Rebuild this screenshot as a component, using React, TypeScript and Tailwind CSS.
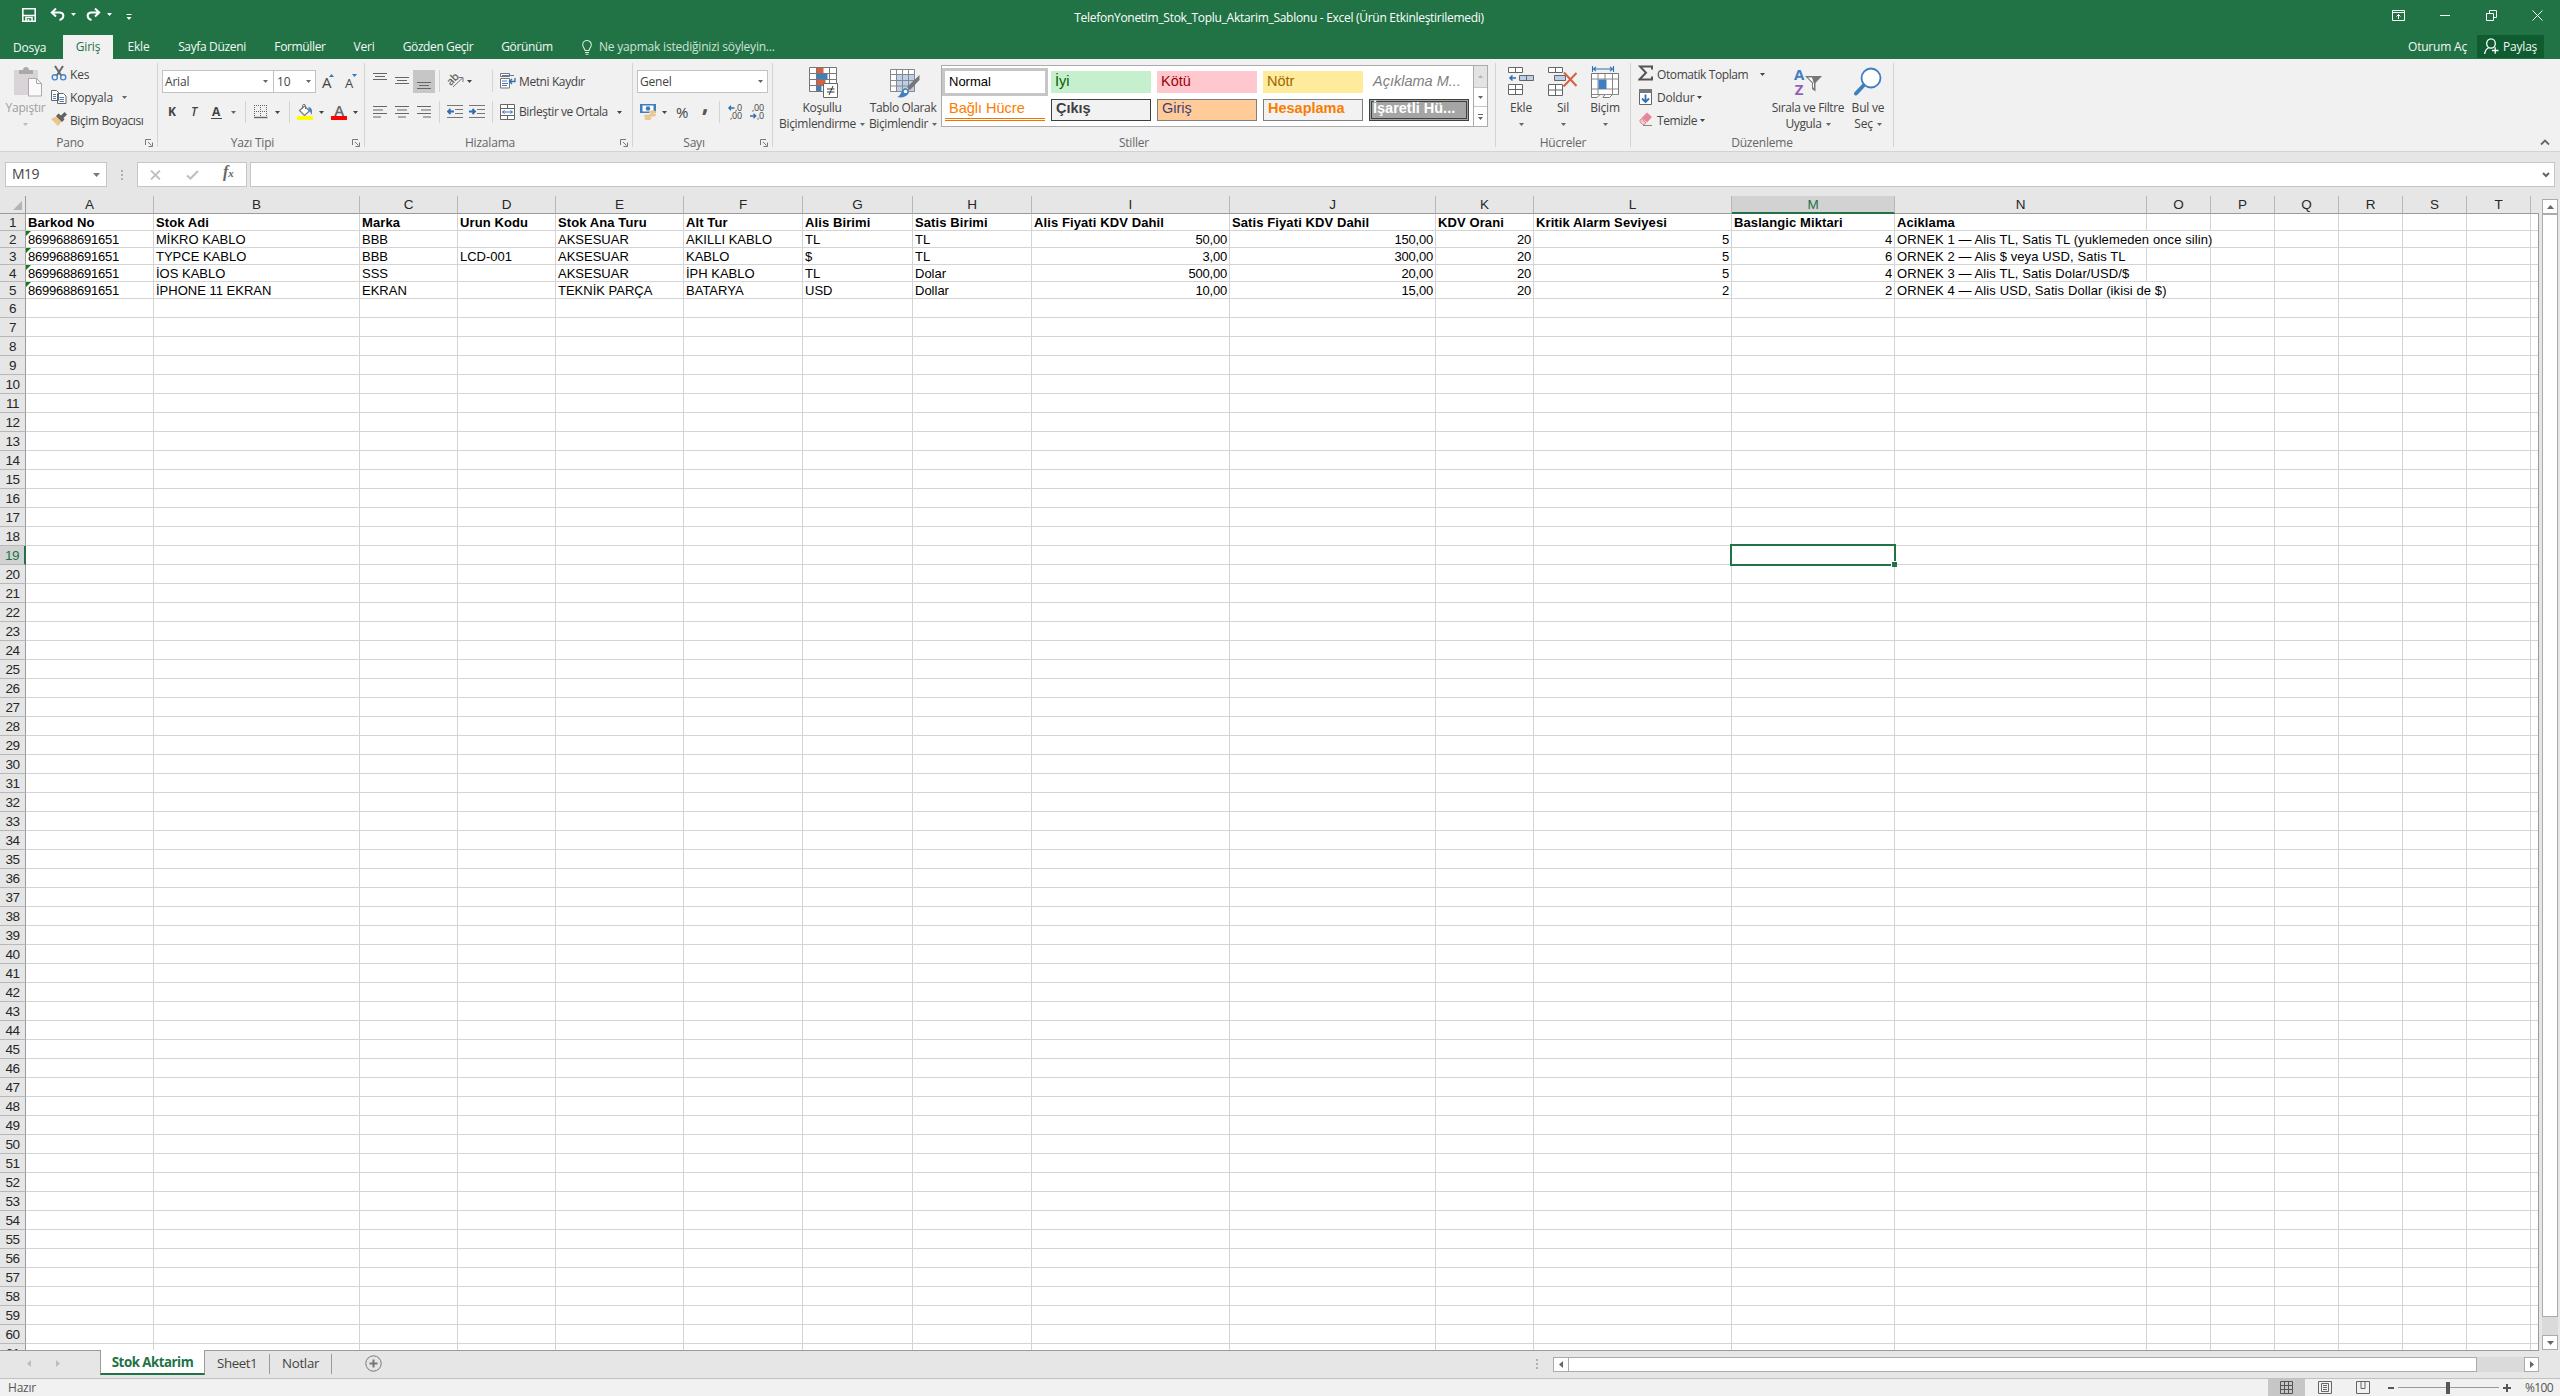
import React from 'react'
import clsx from 'clsx'

interface Column {
    id: string
    width: number
}

interface StyleCell {
    label: string
    className: string
}

const COLUMNS: Column[] = [
    { id: 'A', width: 128 },
    { id: 'B', width: 206 },
    { id: 'C', width: 98 },
    { id: 'D', width: 98 },
    { id: 'E', width: 128 },
    { id: 'F', width: 119 },
    { id: 'G', width: 110 },
    { id: 'H', width: 119 },
    { id: 'I', width: 198 },
    { id: 'J', width: 206 },
    { id: 'K', width: 98 },
    { id: 'L', width: 198 },
    { id: 'M', width: 163 },
    { id: 'N', width: 252 },
    { id: 'O', width: 64 },
    { id: 'P', width: 64 },
    { id: 'Q', width: 64 },
    { id: 'R', width: 64 },
    { id: 'S', width: 64 },
    { id: 'T', width: 64 },
]

const HEADERS = ['Barkod No', 'Stok Adi', 'Marka', 'Urun Kodu', 'Stok Ana Turu', 'Alt Tur', 'Alis Birimi', 'Satis Birimi', 'Alis Fiyati KDV Dahil', 'Satis Fiyati KDV Dahil', 'KDV Orani', 'Kritik Alarm Seviyesi', 'Baslangic Miktari', 'Aciklama']

const DATA = [
    HEADERS,
    ['8699688691651', 'MİKRO KABLO', 'BBB', '', 'AKSESUAR', 'AKILLI KABLO', 'TL', 'TL', '50,00', '150,00', '20', '5', '4', 'ORNEK 1 — Alis TL, Satis TL (yuklemeden once silin)'],
    ['8699688691651', 'TYPCE KABLO', 'BBB', 'LCD-001', 'AKSESUAR', 'KABLO', '$', 'TL', '3,00', '300,00', '20', '5', '6', 'ORNEK 2 — Alis $ veya USD, Satis TL'],
    ['8699688691651', 'İOS KABLO', 'SSS', '', 'AKSESUAR', 'İPH KABLO', 'TL', 'Dolar', '500,00', '20,00', '20', '5', '4', 'ORNEK 3 — Alis TL, Satis Dolar/USD/$'],
    ['8699688691651', 'İPHONE 11 EKRAN', 'EKRAN', '', 'TEKNİK PARÇA', 'BATARYA', 'USD', 'Dollar', '10,00', '15,00', '20', '2', '2', 'ORNEK 4 — Alis USD, Satis Dollar (ikisi de $)'],
]

// how many empty neighbours the text of column N runs over, by row number
const SPILL: Record<number, number> = { 2: 2, 5: 1 }

const ROW_COUNT = 61
const ACTIVE_ROW = 19
const ACTIVE_COL = 'M'

const STYLES: StyleCell[] = [
    { label: 'Normal', className: 'bg-white text-black text-[13px] leading-[21px] outline-3 outline-[#c6c6c6]' },
    { label: 'İyi', className: 'bg-[#c6efce] text-[#006100] text-[14.5px] leading-[20px]' },
    { label: 'Kötü', className: 'bg-[#ffc7ce] text-[#9c0006] text-[14.5px] leading-[20px]' },
    { label: 'Nötr', className: 'bg-[#ffeb9c] text-[#9c6500] text-[14.5px] leading-[20px]' },
    { label: 'Açıklama M...', className: 'italic text-[#7f7f7f] text-[14.5px] leading-[20px]' },
    { label: 'Bağlı Hücre', className: 'text-[#fa7d00] text-[14.5px] leading-[18px] border-b-3 border-double border-[#ea7500]' },
    { label: 'Çıkış', className: 'bg-[#f2f2f2] font-bold text-[#3f3f3f] text-[14.5px] leading-[17px] border border-[#3f3f3f]' },
    { label: 'Giriş', className: 'bg-[#ffcc99] text-[#3f3f76] text-[14.5px] leading-[17px] border border-[#7f7f7f]' },
    { label: 'Hesaplama', className: 'bg-[#f2f2f2] font-bold text-[#fa7d00] text-[14.5px] leading-[17px] border border-[#7f7f7f]' },
    { label: 'İşaretli Hü...', className: 'bg-[#a5a5a5] font-bold text-white text-[14.5px] leading-[13px] -indent-[3px] border-3 border-double border-[#3f3f3f]' },
]

/* ---------- small shared bits ---------- */

function Caret({ className }: { className?: string }) {
    return (
        <svg width="5" height="3" viewBox="0 0 5 3" className={clsx('shrink-0', className ?? 'text-[#666]')}>
            <path d="M0 0h5L2.5 3z" fill="currentColor" />
        </svg>
    )
}

function Divider({ className }: { className?: string }) {
    return <div className={clsx('h-[22px] w-px shrink-0 bg-[#d4d4d4]', className)} />
}

function Launcher() {
    return (
        <svg width="8" height="8" viewBox="0 0 8 8" fill="none" stroke="#777">
            <path d="M.5 6V.5H6M3 3l3.5 3.5M7.5 3.5v4h-4" />
        </svg>
    )
}

interface GroupProps {
    label: string
    className: string
    launcher?: boolean
    children: React.ReactNode
}

function Group({ label, className, launcher, children }: GroupProps) {
    return (
        <div className={clsx('flex h-full shrink-0', className)}>
            <div className="flex min-w-0 flex-1 flex-col">
                <div className="h-[76px]">{children}</div>
                <div className="flex h-4 items-center">
                    <span className={clsx('flex-1 text-center text-[#666]', launcher && 'pr-[5px]')}>{label}</span>
                    {launcher && (
                        <span className="w-3">
                            <Launcher />
                        </span>
                    )}
                </div>
            </div>
            <div className="mt-1 h-[84px] w-px bg-[#d4d4d4]" />
        </div>
    )
}

interface BigButtonProps {
    icon: React.ReactNode
    line1: string
    line2?: string
    className: string
    muted?: boolean
}

function BigButton({ icon, line1, line2, className, muted }: BigButtonProps) {
    return (
        <div className={clsx('flex shrink-0 flex-col items-center whitespace-nowrap', muted ? 'text-[#a0a0a0]' : 'text-[#444]', className)}>
            <div className="mt-[6px] h-[35px]">{icon}</div>
            <div className="h-4 leading-4">{line1}</div>
            <div className="flex h-4 items-center gap-1 leading-4">
                {line2}
                <Caret className={muted ? 'text-[#bbb]' : 'text-[#666]'} />
            </div>
        </div>
    )
}

/* ---------- title bar + tabs ---------- */

function TitleBar() {
    return (
        <div className="flex h-[35px] text-white">
            <div className="flex w-[1072px] pl-[22px]">
                <svg width="14" height="14" viewBox="0 0 14 14" className="mt-2" fill="none" stroke="white" strokeWidth="1.6">
                    <path d="M.8.8h12.4v12.4H.8zM1 7.5h12" />
                    <path d="M4 13v-3.500h6V13M6.500 11v2" />
                </svg>
                <svg width="15" height="13" viewBox="0 0 15 13" className="mt-2 ml-[14px]" fill="none" stroke="white" strokeWidth="2">
                    <path d="M1.500 4.500h8.500c5 .8 4 6.500-.5 7.500M6 .5L1.800 4.500 6 8.500" />
                </svg>
                <Caret className="mt-[13px] ml-1.5 text-white" />
                <svg width="15" height="13" viewBox="0 0 15 13" className="mt-2 ml-[10px]" fill="none" stroke="white" strokeWidth="2">
                    <path d="M13.500 4.500H5c-5 .8-4 6.500.5 7.500M9 .5l4.200 4L9 8.500" />
                </svg>
                <Caret className="mt-[13px] ml-1.5 text-white" />
                <svg width="6" height="6" viewBox="0 0 6 6" className="mt-[14px] ml-[14px]">
                    <path d="M.5 0h5v1h-5zM.5 3h5L3 6z" fill="white" />
                </svg>
            </div>
            <div className="w-[414px] pt-[10px] text-center leading-4 tracking-[-0.29px] whitespace-nowrap">TelefonYonetim_Stok_Toplu_Aktarim_Sablonu - Excel (Ürün Etkinleştirilemedi)</div>
            <div className="flex flex-1 justify-end pt-[9px] pr-[17px]">
                <svg width="13" height="11" viewBox="0 0 13 11" className="mt-px mr-[35px]" fill="none" stroke="white">
                    <path d="M.5.5h12v10H.5zM.5 2.500h12M6.500 9V4.500M4.500 6.500l2-2 2 2" />
                </svg>
                <svg width="10" height="11" viewBox="0 0 10 11" className="mr-[36px]" stroke="white">
                    <path d="M0 6.500h10" />
                </svg>
                <svg width="11" height="11" viewBox="0 0 11 11" className="mt-px mr-[35px]" fill="none" stroke="white">
                    <path d="M.5 3.500h7v7h-7zM3.500 3.500v-3h7v7h-3" />
                </svg>
                <svg width="11" height="11" viewBox="0 0 11 11" className="mt-px" stroke="white">
                    <path d="M.5.5l10 10M10.500.5l-10 10" />
                </svg>
            </div>
        </div>
    )
}

function RibbonTabs() {
    return (
        <div className="flex h-6 items-center text-[#f3f8f5]">
            <div className="w-[63px] pr-1 pl-[13px] pt-px">Dosya</div>
            <div className="flex h-full w-[50px] items-center justify-center bg-[#f1f1f1] text-[#217346]">Giriş</div>
            <div className="w-[51px] text-center">Ekle</div>
            <div className="w-[96px] text-center tracking-[-0.35px] whitespace-nowrap">Sayfa Düzeni</div>
            <div className="w-[80px] text-center tracking-[-0.35px]">Formüller</div>
            <div className="w-[48px] text-center">Veri</div>
            <div className="w-[100px] text-center tracking-[-0.4px] whitespace-nowrap">Gözden Geçir</div>
            <div className="w-[78px] text-center tracking-[-0.35px]">Görünüm</div>
            <svg width="10" height="15" viewBox="0 0 10 15" className="ml-4" fill="none" stroke="#d5e6dc" strokeWidth="1.100">
                <path d="M3 10.500C3 8.500.7 7.500.7 4.800a4.300 4.300 0 018.600 0C9.300 7.500 7 8.500 7 10.500zM3 12.500h4M3.500 14.300h3" />
            </svg>
            <div className="ml-[7px] tracking-[-0.2px] whitespace-nowrap text-[#cfe2d7]">Ne yapmak istediğinizi söyleyin...</div>
            <div className="ml-auto whitespace-nowrap">Oturum Aç</div>
            <div className="mr-4 ml-[10px] flex h-[23px] w-[67px] items-center self-start bg-[#0e5c2f] pl-[7px]">
                <svg width="15" height="17" viewBox="0 0 15 17" fill="none" stroke="white" strokeWidth="1.300">
                    <ellipse cx="7" cy="5.500" rx="4.300" ry="4.700" />
                    <path d="M.7 16c.3-3.500 2-5.500 4.300-6.500M8 12.500h6.500M11.200 9.300v6.500" />
                </svg>
                <span className="ml-1">Paylaş</span>
            </div>
        </div>
    )
}

/* ---------- ribbon ---------- */

function ClipboardGroup() {
    return (
        <Group label="Pano" className="w-[158px]" launcher>
            <div className="flex">
                <BigButton
                    className="w-[51px]"
                    muted
                    line1="Yapıştır"
                    icon={
                        <svg width="30" height="32" viewBox="0 0 30 32" className="ml-1">
                            <path d="M1 5h24v25H1z" fill="#d8d4d8" />
                            <path d="M6 5h4c0-4 6-4 6 0h4v4H6z" fill="#aaa" />
                            <path d="M15.500 13.500h8l5 5v12.500h-13z" fill="#fbf9fb" stroke="#aaa" />
                            <path d="M23.500 13.500v5h5" fill="none" stroke="#aaa" />
                        </svg>
                    }
                />
                <div className="flex flex-col pt-[4px] text-[#444]">
                    <div className="flex h-[23px] items-center">
                        <svg width="16" height="16" viewBox="0 0 16 16" fill="none" className="mb-1">
                            <path d="M4 1l6.500 10M12 1L5.500 11" stroke="#666" strokeWidth="2" />
                            <circle cx="3.800" cy="12.300" r="2.600" stroke="#4a86c5" strokeWidth="1.400" />
                            <circle cx="12.200" cy="12.300" r="2.600" stroke="#4a86c5" strokeWidth="1.400" />
                        </svg>
                        <span className="ml-[3px]">Kes</span>
                    </div>
                    <div className="flex h-[23px] items-center">
                        <svg width="16" height="14" viewBox="0 0 16 14" className="mb-0.5">
                            <path d="M.5.500h5l2 2v8h-7zM6.500 3.500h6l2.500 2.500v7.500H6.500z" fill="white" stroke="#666" />
                            <path d="M2 4.500h3M2 6.500h3M2 8.500h3M8.500 7.500h4.500M8.500 9.500h4.500M8.500 11.500h4.500" stroke="#4a7ebb" />
                        </svg>
                        <span className="ml-[3px] w-[42px]">Kopyala</span>
                        <Caret className="ml-[10px] text-[#666]" />
                    </div>
                    <div className="flex h-[23px] items-center">
                        <svg width="16" height="14" viewBox="0 0 16 14" className="mb-1">
                            <path d="M0 7l6-3 5 5-4 5z" fill="#ebc68c" />
                            <path d="M5 4l2.500-2.500 2.500 2L13.500 0 16 2.500 12.500 6l1 1.500L11 10z" fill="#636363" />
                        </svg>
                        <span className="ml-[3px] tracking-[-0.4px] whitespace-nowrap">Biçim Boyacısı</span>
                    </div>
                </div>
            </div>
        </Group>
    )
}

function FontGroup() {
    return (
        <Group label="Yazı Tipi" className="w-[207px]" launcher>
            <div className="flex pt-[11px] pl-1 text-[#444]">
                <div className="flex h-[23px] w-[112px] items-center justify-between border border-[#c3c3c3] bg-white pr-[5px] pl-[2px]">
                    <span>Arial</span>
                    <Caret />
                </div>
                <div className="-ml-px flex h-[23px] w-[43px] items-center justify-between border border-[#c3c3c3] bg-white pr-1 pl-[3px]">
                    <span>10</span>
                    <Caret />
                </div>
                <div className="ml-1.5 flex w-[14px] pt-[4px]">
                    <span className="text-[15px]/4 text-[#444]">A</span>
                    <svg width="5" height="3" viewBox="0 0 5 3" className="-ml-0.5 shrink-0"><path d="M0 3h5L2.500 0z" fill="#2b7bc4" /></svg>
                </div>
                <div className="ml-[9px] flex w-[14px] pt-[4px]">
                    <span className="text-[13px]/[18px] text-[#444]">A</span>
                    <svg width="5" height="3" viewBox="0 0 5 3" className="-ml-px shrink-0"><path d="M0 0h5L2.500 3z" fill="#2b7bc4" /></svg>
                </div>
            </div>
            <div className="mt-2 flex h-[22px] items-center pl-[3px] text-[#444]">
                <span className="w-[22px] text-center font-bold">K</span>
                <span className="w-[22px] text-center font-semibold italic">T</span>
                <div className="flex w-[22px] justify-center">
                    <span className="h-[13px] w-[11px] border-b border-[#444] text-center text-xs/3 font-bold">A</span>
                </div>
                <Caret className="mx-[4px] text-[#666]" />
                <Divider className="ml-[5px]" />
                <svg width="14" height="14" viewBox="0 0 14 14" className="ml-2" stroke="#666" fill="none">
                    <path d="M.5 0v12M6.500 0v12M12.500 0v12M0 .5h13M0 6.500h13" strokeDasharray="1 1" />
                    <path d="M0 12.500h13.500" strokeWidth="1.400" />
                </svg>
                <Caret className="ml-[7px]" />
                <Divider className="ml-[9px]" />
                <svg width="16" height="16" viewBox="0 0 16 16" className="ml-[7px]">
                    <path d="M2.500 6.500l5-4.500 5 5-5 4.500z" fill="white" stroke="#777" strokeWidth="1.200" />
                    <path d="M5.500 5V1.500c0-1.500 3-1.500 3 0V5" fill="none" stroke="#777" />
                    <path d="M11.500 3c3 .5 4.500 3 3 8-1-2-1-4-3-5z" fill="#4a86c5" />
                    <path d="M0 12h16v4H0z" fill="#ffff00" />
                </svg>
                <Caret className="ml-1.5" />
                <div className="ml-[7px] flex w-4 flex-col items-center">
                    <span className="h-3 text-[15px]/3 font-semibold text-[#666]">A</span>
                    <span className="h-1 w-4 bg-[#ff0000]" />
                </div>
                <Caret className="ml-1.5" />
            </div>
        </Group>
    )
}

function Lines({ d, className }: { d: string; className?: string }) {
    return (
        <svg width="14" height="12" viewBox="0 0 14 12" className={clsx('shrink-0', className)} stroke="#666">
            <path d={d} />
        </svg>
    )
}

function IndentIcon({ arrow, className }: { arrow: string; className?: string }) {
    return (
        <svg width="16" height="14" viewBox="0 0 16 14" className={clsx('shrink-0', className)} fill="none">
            <path d="M0 .5h16M8 4.500h8M8 8.500h8M0 12.500h16" stroke="#777" />
            <path d={arrow} stroke="#2f6fb3" strokeWidth="1.800" />
        </svg>
    )
}

function AlignGroup() {
    return (
        <Group label="Hizalama" className="w-[268px]" launcher>
            <div className="flex pt-[11px] text-[#444]">
                <Lines className="ml-2 mt-[3px]" d="M0 .5h14M2 3.500h10M0 6.500h14" />
                <Lines className="ml-2 mt-[7px]" d="M0 .5h14M2 3.500h10M0 6.500h14" />
                <div className="ml-1 h-[23px] w-[22px] bg-[#c6c6c6] pt-3 pl-1">
                    <Lines d="M0 .5h14M2 3.500h10M0 6.500h14" />
                </div>
                <Divider className="ml-1" />
                <div className="relative ml-[7px] h-[23px] w-4">
                    <span className="absolute top-px -left-px -rotate-45 text-[11px]/4 font-semibold text-[#666]">ab</span>
                    <svg width="12" height="12" viewBox="0 0 12 12" className="absolute top-1.5 left-[5px]" fill="none" stroke="#777">
                        <path d="M1 11L10.500 2M6.500 1.500h4.500v4.500" />
                    </svg>
                </div>
                <Caret className="mt-[10px] ml-1" />
                <Divider className="ml-[20px]" />
                <svg width="16" height="16" viewBox="0 0 16 16" className="mt-[3px] ml-[7px]">
                    <path d="M.5.500h9v3h-9zM.5 5.500h9v9.500h-9z" fill="white" stroke="#777" />
                    <path d="M2 2.500h12M2 8h5M2 10.500h6M2 12.500h5" stroke="#4a7ebb" />
                    <path d="M15 5v3.500H10M12 6l-2.500 2.500L12 11" fill="none" stroke="#2f6fb3" strokeWidth="1.300" />
                </svg>
                <span className="ml-[3px] leading-[23px] tracking-[-0.4px] whitespace-nowrap">Metni Kaydır</span>
            </div>
            <div className="mt-2 flex h-[22px] items-center text-[#444]">
                <Lines className="ml-2" d="M0 .5h14M0 4h10M0 7.500h14M0 11h8" />
                <Lines className="ml-2" d="M0 .5h14M2 4h10M0 7.500h14M3 11h8" />
                <Lines className="ml-2" d="M0 .5h14M4 4h10M0 7.500h14M6 11h8" />
                <Divider className="ml-2" />
                <IndentIcon className="ml-[7px]" arrow="M7 6.500H1M3.500 4L1 6.500 3.500 9" />
                <IndentIcon className="ml-1.5" arrow="M0 6.500h6M3.500 4L6 6.500 3.500 9" />
                <Divider className="ml-[7px]" />
                <svg width="15" height="16" viewBox="0 0 15 16" className="ml-[7px]">
                    <path d="M.5.5h14v15H.5zM.5 4.500h14M.5 11.500h14M7.500.5v4M7.500 11.500v4" fill="white" stroke="#666" />
                    <path d="M2.500 8h10M4.500 6.500L2.500 8l2 1.500M10.500 6.500l2 1.500-2 1.500" fill="none" stroke="#2f6fb3" />
                </svg>
                <span className="ml-1 w-[88px] tracking-[-0.45px] whitespace-nowrap">Birleştir ve Ortala</span>
                <Caret className="ml-[10px]" />
            </div>
        </Group>
    )
}

function NumberGroup() {
    return (
        <Group label="Sayı" className="w-[140px]" launcher>
            <div className="flex pt-[11px] pl-1 text-[#444]">
                <div className="flex h-[23px] w-[131px] items-center justify-between border border-[#c3c3c3] bg-white pr-1 pl-[2px]">
                    <span>Genel</span>
                    <Caret />
                </div>
            </div>
            <div className="mt-2 flex h-[22px] items-center pl-[7px] text-[#444]">
                <svg width="16" height="16" viewBox="0 0 16 16">
                    <path d="M0 0h16v9H0z" fill="#3f7fc0" />
                    <path d="M2.500 1.500h11v6h-11z" fill="white" />
                    <circle cx="8" cy="4.500" r="2.300" fill="#3f7fc0" />
                    <ellipse cx="12.500" cy="8" rx="3.500" ry="1.800" fill="#ebc68c" />
                    <ellipse cx="12.500" cy="11" rx="3.500" ry="1.500" fill="#ebc68c" />
                    <ellipse cx="7.500" cy="12" rx="3.500" ry="1.500" fill="#ebc68c" />
                    <ellipse cx="8" cy="14.500" rx="3.500" ry="1.500" fill="#ebc68c" />
                </svg>
                <Caret className="ml-1.5" />
                <span className="ml-[9px] w-[15px] text-[15px] text-[#444]">%</span>
                <span className="ml-[10px] w-[8px] pb-[19px] text-center text-2xl/3 font-bold text-[#555]">,</span>
                <Divider className="ml-[10px]" />
                <div className="ml-[7px] flex w-[15px] flex-col items-end text-[9px]/[8px]">
                    <span className="flex items-center">
                        <svg width="7" height="6" viewBox="0 0 7 6" fill="none" stroke="#2f6fb3" strokeWidth="1.300"><path d="M6.500 3H1M3 .8L.8 3 3 5.200" /></svg>
                        ,0
                    </span>
                    <span>,00</span>
                </div>
                <div className="ml-[7px] flex w-[15px] flex-col items-end text-[9px]/[8px]">
                    <span>,00</span>
                    <span className="flex items-center">
                        <svg width="7" height="6" viewBox="0 0 7 6" fill="none" stroke="#2f6fb3" strokeWidth="1.300"><path d="M0 3h5.500M3.500.8L5.800 3 3.500 5.200" /></svg>
                        ,0
                    </span>
                </div>
            </div>
        </Group>
    )
}

function StylesGroup() {
    return (
        <Group label="Stiller" className="w-[723px]">
            <div className="flex">
                <BigButton
                    className="ml-1 w-[90px] tracking-[-0.3px]"
                    line1="Koşullu"
                    line2="Biçimlendirme"
                    icon={
                        <svg width="30" height="31" viewBox="0 0 30 31" className="mt-0.5 ml-1">
                            <path d="M.5.500h27v24H.5z" fill="white" />
                            <path d="M7.500.500h7v6h-7zM7.500 12.500h9v6h-9z" fill="#d9603f" />
                            <path d="M7.500 6.500h11v6h-11zM7.500 18.500h5v6h-5z" fill="#3f7fc0" />
                            <path d="M.5.500h27v24H.5zM.5 6.500h27M.5 12.500h27M.5 18.500h27M7.500.500v24M20.500.500v24" fill="none" stroke="#777" />
                            <path d="M14.500 16.500h14v14h-14z" fill="white" stroke="#666" />
                            <path d="M18 22h7.500M18 25h7.500M24 19l-4 9" stroke="#333" />
                        </svg>
                    }
                />
                <BigButton
                    className="-ml-[2px] w-[76px] tracking-[-0.35px]"
                    line1="Tablo Olarak"
                    line2="Biçimlendir"
                    icon={
                        <svg width="30" height="29" viewBox="0 0 30 29" className="mt-1 ml-1">
                            <path d="M.5.500h24v22H.5z" fill="white" />
                            <path d="M6.500 5.500h18v17h-18z" fill="#bdd0e9" />
                            <path d="M.5.500h24v22H.5zM.5 5.500h24M.5 11.500h24M.5 17h24M6.500.500v22M12.500.500v22M18.500.500v22" fill="none" stroke="#888" />
                            <path d="M29.500 6v5L20 21l-3-3z" fill="#777" />
                            <path d="M7 28c4-1 4-6 7-8.500 3-1 6 2 4.500 5C16 28.500 11 29 7 28z" fill="#3f7fc0" />
                            <circle cx="15.500" cy="22.500" r="1.800" fill="white" />
                        </svg>
                    }
                />
                <div className="mt-1.5 flex h-[62px] w-[547px] border border-[#ababab] bg-white font-['Liberation_Sans',sans-serif] tracking-normal">
                    <div className="grid grid-cols-[repeat(5,100px)] grid-rows-[22px_22px] content-start gap-x-1.5 gap-y-1.5 pt-[5px] pl-[3px]">
                        {STYLES.map(style => (
                            <div key={style.label} className={clsx('pl-1 whitespace-nowrap', style.className)}>
                                {style.label}
                            </div>
                        ))}
                    </div>
                    <div className="ml-auto flex w-[14px] flex-col border-l border-[#ababab]">
                        <div className="flex h-[21px] items-center justify-center bg-[#e3e3e3]"><Caret className="rotate-180 text-[#b5b5b5]" /></div>
                        <div className="flex h-[20px] items-center justify-center border-y border-[#c6c6c6]"><Caret /></div>
                        <div className="flex flex-1 flex-col items-center justify-center gap-[2px]">
                            <span className="h-px w-[5px] bg-[#666]" />
                            <Caret />
                        </div>
                    </div>
                </div>
            </div>
        </Group>
    )
}

function CellsGroup() {
    return (
        <Group label="Hücreler" className="w-[135px]">
            <div className="flex pl-1">
                <BigButton
                    className="w-[42px]"
                    line1="Ekle"
                    icon={
                        <svg width="27" height="30" viewBox="0 0 27 30" className="mt-0.5">
                            <path d="M.5.500h14v5H.5zM7.500.500v5M.5 17.500h14v10H.5zM7.500 17.500v10M.5 22.500h14" fill="white" stroke="#666" />
                            <path d="M11.500 8.500h14v5h-14zM18.500 8.500v5" fill="#bdd0e9" stroke="#666" />
                            <path d="M8 11H2M4.500 8.500L2 11l2.500 2.500" fill="none" stroke="#2f6fb3" strokeWidth="1.600" />
                        </svg>
                    }
                />
                <BigButton
                    className="w-[42px]"
                    line1="Sil"
                    icon={
                        <svg width="30" height="30" viewBox="0 0 30 30" className="mt-0.5">
                            <path d="M.5.500h14v5H.5zM7.500.500v5M.5 17.500h14v11H.5zM7.500 17.500v11M.5 23h14" fill="white" stroke="#666" />
                            <path d="M6.500 8.500h11v5h-11z" fill="#bdd0e9" stroke="#666" />
                            <path d="M16 5.500l12.500 13.500M28.500 6L15.500 19.500" fill="none" stroke="#d9603f" strokeWidth="2" />
                        </svg>
                    }
                />
                <BigButton
                    className="w-[42px]"
                    line1="Biçim"
                    icon={
                        <svg width="29" height="33" viewBox="0 0 29 33" className="mt-px">
                            <path d="M1.500 0v6M22.500 0v6M2 3h20M5 .8L2.500 3 5 5.200M19 .8L21.500 3 19 5.200" fill="none" stroke="#2f6fb3" strokeWidth="1.100" />
                            <path d="M.5 7.500h27v21h-6l-3 3H12l2-3H9l-3 3H.5z" fill="white" stroke="#777" />
                            <path d="M.5 13h27M.5 23h27M.5 28.500h27M7 7.500v21M21.500 7.500v21M14 7.500v6" fill="none" stroke="#888" />
                            <path d="M7.500 13.500h8v9.500h-8z" fill="#3f7fc0" />
                        </svg>
                    }
                />
            </div>
        </Group>
    )
}

function EditingGroup() {
    return (
        <Group label="Düzenleme" className="w-[263px]">
            <div className="flex">
                <div className="flex w-[137px] flex-col pt-[4px] pl-[7px] text-[#444]">
                    <div className="flex h-[23px] items-center">
                        <svg width="15" height="16" viewBox="0 0 15 16" className="mb-1" fill="none" stroke="#555" strokeWidth="2">
                            <path d="M14 4.500V1.500H2l6 6.200-6.500 6.800H14v-3" />
                        </svg>
                        <span className="ml-1 w-[92px] tracking-[-0.4px] whitespace-nowrap">Otomatik Toplam</span>
                        <Caret className="ml-[11px]" />
                    </div>
                    <div className="flex h-[23px] items-center">
                        <svg width="15" height="16" viewBox="0 0 15 16" className="mb-0.5">
                            <path d="M1.500.500h12v15h-12z" fill="white" stroke="#666" />
                            <path d="M1 0h13v4H1z" fill="#777" />
                            <path d="M7.500 5.500V13M4 9.500l3.500 3.500L11 9.500" fill="none" stroke="#2f6fb3" strokeWidth="1.800" />
                        </svg>
                        <span className="ml-1">Doldur</span>
                        <Caret className="ml-[3px]" />
                    </div>
                    <div className="flex h-[23px] items-center">
                        <svg width="15" height="14" viewBox="0 0 15 14" className="mb-1">
                            <path d="M3.500 6L9 .5l5 4.500L9 10.500z" fill="#e8869a" />
                            <path d="M3.500 6.500l4.500 4.500-1.500 1.500H4.500l-2.500-2.500V8z" fill="#f4c3cc" stroke="#e8869a" />
                            <path d="M5 13.500h9" stroke="#888" />
                        </svg>
                        <span className="ml-1 tracking-[-0.4px]">Temizle</span>
                        <Caret className="ml-[3px]" />
                    </div>
                </div>
                <BigButton
                    className="w-[80px] tracking-[-0.35px]"
                    line1="Sırala ve Filtre"
                    line2="Uygula"
                    icon={
                        <div className="mt-0.5 flex h-8 w-[30px]">
                            <div className="flex w-3 flex-col text-center text-[15px]/[15px] font-bold">
                                <span className="text-[#3f7fc0]">A</span>
                                <span className="text-[#9561b5]">Z</span>
                            </div>
                            <svg width="18" height="17" viewBox="0 0 18 17" className="mt-2">
                                <path d="M0 1h17l-6.500 7v8.500L7 14V8z" fill="#777" />
                                <path d="M3 2.500h4L9 9v4l-1-.8V7.500z" fill="white" />
                            </svg>
                        </div>
                    }
                />
                <BigButton
                    className="w-[40px]"
                    line1="Bul ve"
                    line2="Seç"
                    icon={
                        <svg width="28" height="29" viewBox="0 0 28 29" className="mt-0.5">
                            <path d="M10 18l-8 8.500" stroke="#3f7fc0" strokeWidth="4" strokeLinecap="round" />
                            <circle cx="17" cy="11" r="9.500" fill="white" stroke="#3f7fc0" strokeWidth="1.800" />
                        </svg>
                    }
                />
            </div>
        </Group>
    )
}

function Ribbon() {
    return (
        <div className="flex h-[93px] border-b border-[#d2d2d2] bg-[#f1f1f1]">
            <ClipboardGroup />
            <FontGroup />
            <AlignGroup />
            <NumberGroup />
            <StylesGroup />
            <CellsGroup />
            <EditingGroup />
            <svg width="10" height="7" viewBox="0 0 10 7" className="mt-auto mr-[10px] mb-[5px] ml-auto" fill="none" stroke="#666" strokeWidth="1.800">
                <path d="M1 5.500l4-4 4 4" />
            </svg>
        </div>
    )
}

function FormulaBar() {
    return (
        <div className="flex h-[44px] pt-[10px] pl-[5px]">
            <div className="flex h-[25px] w-[102px] items-center justify-between border border-[#c6c6c6] bg-white pr-1.5 pl-1.5 text-[14px] text-[#444]">
                <span className="tracking-[-0.5px]">M19</span>
                <svg width="7" height="4" viewBox="0 0 7 4"><path d="M0 0h7L3.500 4z" fill="#777" /></svg>
            </div>
            <div className="flex h-[25px] w-[30px] flex-col items-center justify-center gap-[2px]">
                <span className="size-0.5 bg-[#b0b0b0]" />
                <span className="size-0.5 bg-[#b0b0b0]" />
                <span className="size-0.5 bg-[#b0b0b0]" />
            </div>
            <div className="flex h-[25px] w-[110px] items-center border border-[#c6c6c6] bg-white">
                <svg width="11" height="10" viewBox="0 0 11 10" className="ml-3" stroke="#c0c0c0" strokeWidth="1.800"><path d="M1 .5l9 9M10 .5l-9 9" /></svg>
                <svg width="13" height="10" viewBox="0 0 13 10" className="ml-[25px]" fill="none" stroke="#c0c0c0" strokeWidth="2.200"><path d="M1 5.500l3.500 3L12 1" /></svg>
                <span className="mb-1 ml-6 font-['Liberation_Serif',serif] text-[16px]/5 font-bold text-[#666] italic">
                    f<span className="text-[11px]">x</span>
                </span>
            </div>
            <div className="ml-[3px] flex h-[25px] w-[2305px] items-center justify-end border border-[#c6c6c6] bg-white pr-1">
                <svg width="8" height="6" viewBox="0 0 8 6" fill="none" stroke="#666" strokeWidth="2"><path d="M1 1l3 3 3-3" /></svg>
            </div>
        </div>
    )
}

/* ---------- sheet ---------- */

function ColumnHeaders() {
    return (
        <div className="flex h-[18px] w-[2539px] overflow-hidden text-center text-[13.500px]/[18px]">
            <div className="flex w-[26px] shrink-0 items-end justify-end border-r border-b border-[#9b9b9b] pr-[3px] pb-[3px]">
                <svg width="9" height="9" viewBox="0 0 9 9"><path d="M9 0v9H0z" fill="#b4b4b4" /></svg>
            </div>
            {COLUMNS.map(col => (
                <div
                    key={col.id}
                    style={{ width: col.width }}
                    className={clsx(
                        'h-[18px] shrink-0 border-r border-r-[#b8b8b8]',
                        col.id === ACTIVE_COL ? 'border-b-2 border-b-[#217346] bg-[#d2d2d2] text-[#217346]' : 'border-b border-b-[#9b9b9b] text-[#262626]'
                    )}
                >
                    {col.id}
                </div>
            ))}
            <div className="flex-1 border-b border-[#9b9b9b]" />
        </div>
    )
}

function SheetRow({ row }: { row: number }) {
    const values = DATA[row - 1] ?? []
    const spill = SPILL[row] ?? 0
    const hidden = COLUMNS.slice(14, 14 + spill).map(c => c.id)

    return (
        <div className={clsx('flex shrink-0', row <= 5 ? 'h-[17px]' : 'h-[19px]')}>
            <div
                className={clsx(
                    'w-[26px] shrink-0 border-b border-b-[#b8b8b8] text-center text-[13.500px] tracking-[-0.4px]',
                    row <= 5 ? 'leading-[17px]' : 'leading-[20px]',
                    row === ACTIVE_ROW ? 'border-r-2 border-r-[#217346] bg-[#d2d2d2] text-[#217346]' : 'border-r border-r-[#9b9b9b] bg-[#e6e6e6] text-[#262626]'
                )}
            >
                {row}
            </div>
            {COLUMNS.filter(col => !hidden.includes(col.id)).map(col => {
                const idx = COLUMNS.indexOf(col)
                const value = values[idx]
                const width = col.id === 'N' ? col.width + spill * 64 : col.width
                const isNumber = row > 1 && idx >= 8 && idx <= 12
                const isBarcode = row > 1 && idx === 0 && !!value
                const isActive = row === ACTIVE_ROW && col.id === ACTIVE_COL
                return (
                    <div
                        key={col.id}
                        style={{ width }}
                        className={clsx(
                            'relative shrink-0 border-r border-b border-[#d4d4d4] px-[2px] text-[13px]/[17px] whitespace-nowrap text-black',
                            row === 1 && 'font-bold tracking-[0.1px]',
                            isNumber && 'text-right tracking-[-0.2px]',
                            isBarcode && 'tracking-[-0.23px]',
                            row > 1 && col.id === 'N' && 'tracking-[0.1px]'
                        )}
                    >
                        {isBarcode && (
                            <svg width="5" height="5" viewBox="0 0 5 5" className="absolute top-0 left-0"><path d="M0 0h5L0 5z" fill="#0a7d18" /></svg>
                        )}
                        {value}
                        {isActive && (
                            <div className="absolute -top-[2px] -right-[2px] -bottom-[2px] -left-[2px] z-10 border-2 border-[#217346]">
                                <span className="absolute -right-[3px] -bottom-[3px] size-[6px] border-t border-l border-white bg-[#217346]" />
                            </div>
                        )}
                    </div>
                )
            })}
            <div className="flex-1 border-b border-[#d4d4d4]" />
        </div>
    )
}

function VerticalScroll() {
    return (
        <div className="ml-[3px] flex w-4 flex-col pt-[3px]">
            <div className="flex h-[15px] items-center justify-center border border-[#ababab] bg-white">
                <svg width="7" height="4" viewBox="0 0 7 4"><path d="M0 4h7L3.500 0z" fill="#666" /></svg>
            </div>
            <div className="flex-1 bg-[#dadada]">
                <div className="h-[1103px] border border-[#ababab] bg-white" />
            </div>
            <div className="flex h-[15px] items-center justify-center border border-[#ababab] bg-white">
                <svg width="7" height="4" viewBox="0 0 7 4"><path d="M0 0h7L3.500 4z" fill="#666" /></svg>
            </div>
        </div>
    )
}

function Sheet() {
    const rows = Array.from({ length: ROW_COUNT }, (_, i) => i + 1)
    return (
        <div className="flex h-[1154px] font-['Liberation_Sans',Arial,sans-serif] tracking-normal">
            <div className="flex w-[2539px] flex-col">
                <ColumnHeaders />
                <div className="flex flex-1 flex-col overflow-hidden border-r border-[#9b9b9b] bg-white">
                    {rows.map(row => (
                        <SheetRow key={row} row={row} />
                    ))}
                </div>
            </div>
            <VerticalScroll />
        </div>
    )
}

function SheetTabs() {
    return (
        <div className="flex h-[28px] text-[13.300px] text-[#444]">
            <div className="flex w-[100px] border-t border-[#9b9b9b] pt-[9px] pl-[27px]">
                <svg width="4" height="7" viewBox="0 0 4 7"><path d="M4 0v7L0 3.500z" fill="#bdbdbd" /></svg>
                <svg width="4" height="7" viewBox="0 0 4 7" className="ml-[25px]"><path d="M0 0v7l4-3.500z" fill="#bdbdbd" /></svg>
            </div>
            <div className="flex h-[25px] w-[105px] items-center justify-center border-x border-b-2 border-x-[#9b9b9b] border-b-[#217346] bg-white pt-[2px] font-bold tracking-[-0.5px] whitespace-nowrap text-[#217346]">Stok Aktarim</div>
            <div className="flex flex-1 border-t border-[#9b9b9b]">
                <div className="mt-[3px] h-5 w-[65px] border-r border-[#9b9b9b] pl-3 leading-[19px] tracking-[-0.4px]">Sheet1</div>
                <div className="mt-[3px] h-5 w-[62px] border-r border-[#9b9b9b] pl-3 leading-[19px] tracking-[-0.3px]">Notlar</div>
                <svg width="17" height="17" viewBox="0 0 17 17" className="mt-[4px] ml-[33px]" fill="none" stroke="#777">
                    <circle cx="8.500" cy="8.500" r="7.700" />
                    <path d="M8.500 4.500v8M4.500 8.500h8" strokeWidth="2" />
                </svg>
                <div className="mt-2 ml-auto flex flex-col gap-[2px]">
                    <span className="size-0.5 bg-[#b0b0b0]" />
                    <span className="size-0.5 bg-[#b0b0b0]" />
                    <span className="size-0.5 bg-[#b0b0b0]" />
                </div>
                <div className="mt-1.5 ml-[15px] flex h-[15px] w-[986px] bg-[#dadada]">
                    <div className="flex w-[16px] items-center justify-center border border-[#ababab] bg-white">
                        <svg width="4" height="7" viewBox="0 0 4 7"><path d="M4 0v7L0 3.500z" fill="#666" /></svg>
                    </div>
                    <div className="-ml-px w-[909px] border border-[#ababab] bg-white" />
                    <div className="ml-auto flex w-[15px] items-center justify-center border border-[#ababab] bg-white">
                        <svg width="4" height="7" viewBox="0 0 4 7"><path d="M0 0v7l4-3.500z" fill="#666" /></svg>
                    </div>
                </div>
            </div>
            <div className="w-[21px]" />
        </div>
    )
}

function StatusBar() {
    return (
        <div className="flex h-[18px] items-center border-t border-[#c0c0c0] bg-[#f1f1f1] text-[12px] text-[#555]">
            <span className="pl-2">Hazır</span>
            <div className="ml-auto flex h-full w-[37px] items-center justify-center bg-[#c6c6c6]">
                <svg width="13" height="13" viewBox="0 0 13 13" fill="none" stroke="#555"><path d="M.5.500h12v12H.5zM.5 4.500h12M.5 8.500h12M4.500.500v12M8.500.500v12" /></svg>
            </div>
            <svg width="14" height="13" viewBox="0 0 14 13" className="ml-[13px]" fill="none" stroke="#666"><path d="M.5.500h13v12H.5zM3.500 2.500h7v8h-7zM5 4.500h4M5 6.500h4M5 8.500h4" /></svg>
            <svg width="14" height="13" viewBox="0 0 14 13" className="ml-[24px]" fill="none" stroke="#666"><path d="M.5.500h13v12H.5zM5 .5v7h4v-7" /></svg>
            <span className="ml-[18px] h-[2px] w-[6px] bg-[#555]" />
            <div className="ml-1 flex w-[101px] items-center">
                <span className="h-px w-[48px] bg-[#999]" />
                <span className="h-3 w-1 bg-[#555]" />
                <span className="h-px flex-1 bg-[#999]" />
            </div>
            <svg width="8" height="8" viewBox="0 0 8 8" className="ml-1" stroke="#555" strokeWidth="2"><path d="M4 0v8M0 4h8" /></svg>
            <span className="mr-[6px] ml-[14px] w-[29px] tracking-[-0.6px]">%100</span>
        </div>
    )
}

export default function App() {
    return (
        <div className="h-[1396px] w-[2560px] overflow-hidden bg-[#e6e6e6] font-['Open_Sans','Noto_Sans',sans-serif] text-xs tracking-[-0.2px]">
            <div className="h-[59px] bg-[#217346]">
                <TitleBar />
                <RibbonTabs />
            </div>
            <Ribbon />
            <FormulaBar />
            <Sheet />
            <SheetTabs />
            <StatusBar />
        </div>
    )
}
